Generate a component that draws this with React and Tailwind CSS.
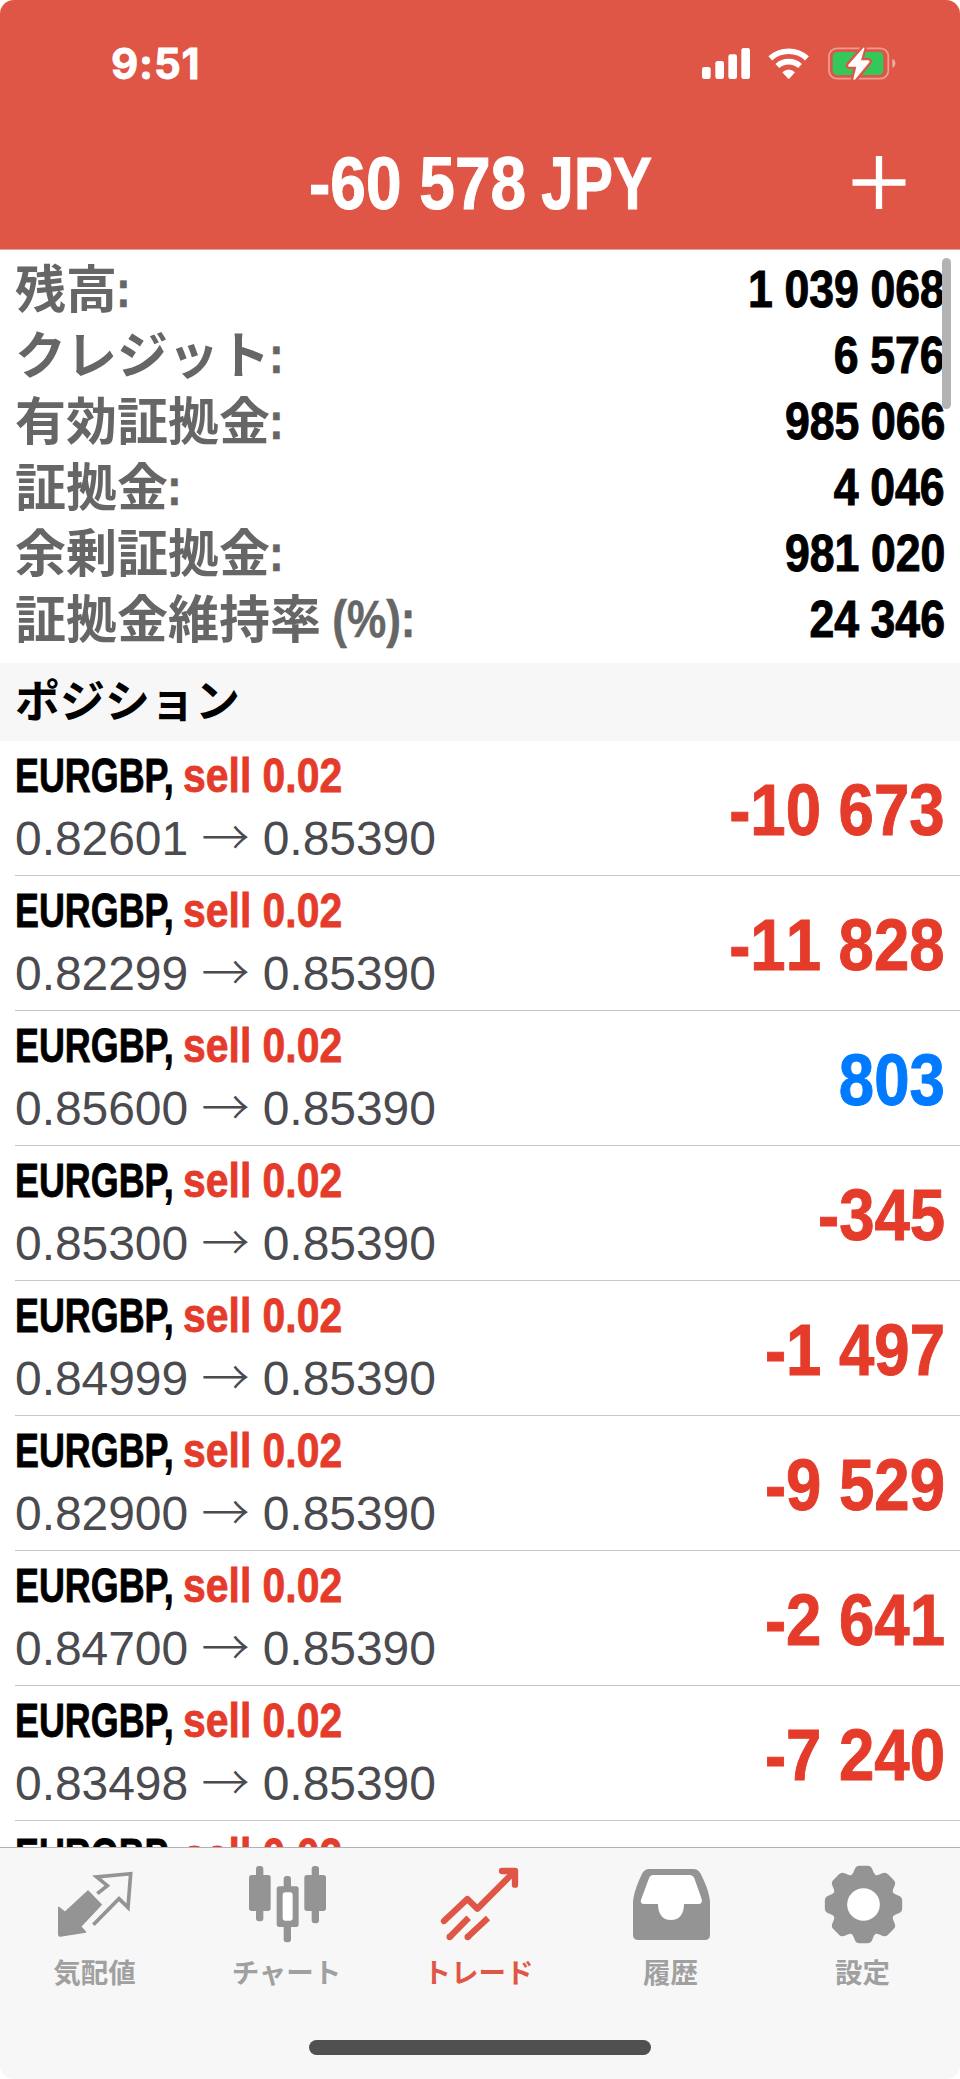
import React from "react";

const account = [
  { label: "残高", value: "1 039 068" },
  { label: "クレジット", value: "6 576" },
  { label: "有効証拠金", value: "985 066" },
  { label: "証拠金", value: "4 046" },
  { label: "余剰証拠金", value: "981 020" },
  { label: "証拠金維持率", unit: "(%)", value: "24 346" },
];

const positions = [
  { open: "0.82601", profit: "-10 673" },
  { open: "0.82299", profit: "-11 828" },
  { open: "0.85600", profit: "803" },
  { open: "0.85300", profit: "-345" },
  { open: "0.84999", profit: "-1 497" },
  { open: "0.82900", profit: "-9 529" },
  { open: "0.84700", profit: "-2 641" },
  { open: "0.83498", profit: "-7 240" },
  { open: "0.84250", profit: "-3 980" },
];

const StatusIcons = () => (
  <svg className="w-[196px] h-[35px]" viewBox="0 0 588 105" fill="#fff">
    <rect x="3" y="63" width="26" height="36" rx="7" />
    <rect x="43" y="45" width="26" height="54" rx="7" />
    <rect x="82" y="25" width="26" height="74" rx="7" />
    <rect x="121" y="6" width="26" height="93" rx="7" />
    <path d="M208 37A82 82 0 0 1 318 37" fill="none" stroke="#fff" strokeWidth="17" />
    <path d="M229 60A51 51 0 0 1 297 60" fill="none" stroke="#fff" strokeWidth="17" />
    <path d="M244 79Q263 62 282 79L266 97Q263 100 260 97Z" />
    <rect x="384" y="7" width="178" height="91" rx="24" fill="none" stroke="#fff" strokeOpacity="0.42" strokeWidth="5.5" />
    <rect x="395" y="18" width="152" height="69" rx="14" fill="#34c759" />
    <path d="M574 38Q583 42 583 52T574 66Z" fillOpacity="0.5" />
    <path
      d="M487 5L442 56Q439 61 444 62H466L457 98Q458 104 463 100L505 49Q508 44 502 43H480L490 8Q491 3 487 5Z"
      stroke="#df5646"
      strokeWidth="14"
      paintOrder="stroke"
    />
  </svg>
);

const QuotesIcon = () => (
  <svg className="w-20 h-20" viewBox="0 0 240 240">
    <path
      d="M8 127L27 142L96 78L136 119L74 185L89 201L13 213Q8 214 8 208Z"
      fill="currentColor"
      stroke="currentColor"
      strokeWidth="4"
      strokeLinejoin="round"
    />
    <path d="M124 86L154 62L122 36L224 26L216 128L189 101L112 179" fill="none" stroke="currentColor" strokeWidth="11" />
  </svg>
);

const ChartIcon = () => (
  <svg className="w-20 h-20" viewBox="0 0 240 240" fill="currentColor">
    <rect x="24" y="3" width="22" height="166" rx="9" />
    <rect x="3" y="30" width="65" height="108" rx="8" />
    <rect x="107" y="33" width="22" height="199" rx="9" />
    <rect x="86" y="64" width="66" height="122" rx="8" />
    <rect x="104" y="82" width="30" height="85" rx="8" fill="#fff" />
    <rect x="191" y="3" width="22" height="172" rx="9" />
    <rect x="169" y="30" width="65" height="108" rx="8" />
  </svg>
);

const TradeIcon = () => (
  <svg className="w-20 h-20" viewBox="0 0 240 240" fill="none" stroke="currentColor" strokeWidth="19" strokeLinejoin="round">
    <path d="M12 168L82 102L112 131L222 21" strokeLinecap="round" />
    <path d="M186 18H225V59" strokeLinecap="round" />
    <path d="M29 216L86 158M83 216L144 159" />
    <path d="M29 216h0.1M83 216h0.1" strokeLinecap="round" />
  </svg>
);

const HistoryIcon = () => (
  <svg className="w-20 h-20" viewBox="0 0 240 240">
    <path
      d="M3 209V115C3 85 20 48 31 25Q38 12 52 12H184Q198 12 205 25C217 48 234 85 234 115V209Q234 225 218 225H19Q3 225 3 209Z"
      fill="currentColor"
    />
    <path
      d="M64 30H172Q182 30 187 40L209 102Q212 117 200 117H156C156 148 142 165 117 165S78 148 78 117H36Q24 117 27 104L51 40Q55 30 64 30Z"
      fill="#fff"
    />
  </svg>
);

const SettingsIcon = () => (
  <svg className="w-20 h-20" viewBox="0 0 240 240">
    <g transform="translate(118.500 118.500)" fill="currentColor">
      <circle r="90" />
      {[0, 45, 90, 135, 180, 225, 270, 315].map((angle) => (
        <path
          key={angle}
          transform={`rotate(${angle})`}
          d="M0 0L-37 -88Q-31 -91 -27 -104Q-23 -116 -12 -116H12Q23 -116 27 -104Q31 -91 37 -88Z"
        />
      ))}
      <circle r="49" fill="#fff" />
    </g>
  </svg>
);

const tabs = [
  { label: "気配値", Icon: QuotesIcon },
  { label: "チャート", Icon: ChartIcon },
  { label: "トレード", Icon: TradeIcon, active: true },
  { label: "履歴", Icon: HistoryIcon },
  { label: "設定", Icon: SettingsIcon },
];

const Header = () => (
  <header className="h-[250px] shrink-0 bg-[#df5646] text-white rounded-t-[14px] border-b border-[#e2a49c]">
    <div className="h-[126px] pl-[111px] pr-[63px] flex justify-between">
      <span className="pt-[39px] font-['Inter'] text-[42px] leading-[50px] font-bold tracking-[0.8px] [-webkit-text-stroke:0.8px]">
        9:51
      </span>
      <div className="pt-[46px]">
        <StatusIcons />
      </div>
    </div>
    <div className="h-[116px] grid grid-cols-[120px_1fr_120px] items-center">
      <span />
      <h1 className="w-[343px] mx-auto flex text-[74px] leading-[116px] font-bold whitespace-nowrap [-webkit-text-stroke:1px]">
        <span className="w-[210px] shrink-0 origin-left scale-x-[0.865]">-60 578</span>
        <span className="w-0 grow flex justify-end">
          <span className="origin-right scale-x-[0.79]">JPY</span>
        </span>
      </h1>
      <button type="button" aria-label="New order" className="pb-[5px]">
        <svg className="w-[54px] h-[54px] ml-[12px]" viewBox="0 0 54 54" stroke="#fff" strokeWidth="6.300">
          <path d="M0.500 27.500H53.500M27 1V54" />
        </svg>
      </button>
    </div>
  </header>
);

const AccountRow = ({ label, unit, value }) => (
  <div className="h-[66px] flex justify-between font-bold leading-[66px] whitespace-nowrap">
    <div className="flex text-[#666]">
      <span className="h-[60px] font-['Noto_Sans_CJK_JP'] text-[51px] leading-[60px]">{label}</span>
      <span className="-ml-px text-[51px] leading-[68px] origin-left scale-x-[0.865] [-webkit-text-stroke:0.5px]">
        {unit ? `\u00a0${unit}:` : ":"}
      </span>
    </div>
    <span className="text-[51px] leading-[68px] origin-right scale-x-[0.875] [word-spacing:-1px] [-webkit-text-stroke:1px]">
      {value}
    </span>
  </div>
);

const PositionRow = ({ open, profit }) => (
  <li className="h-[135px] shrink-0 ml-[15px] pr-[15px] flex justify-between border-b border-[#c8c7cc] whitespace-nowrap">
    <div className="pt-[5px]">
      <div className="h-[58px] flex text-[49px] leading-[58px] font-bold [-webkit-text-stroke:0.8px]">
        <span className="w-[168px] origin-left scale-x-[0.732]">EURGBP,</span>
        <span className="origin-left scale-x-[0.835] text-[#e53b2a]">sell 0.02</span>
      </div>
      <div className="text-[48px] leading-[70px] tracking-[-0.05px] text-[#4a4a4f]">
        {open} <span className="font-['Noto_Sans_CJK_JP'] font-light leading-none">→</span> 0.85390
      </div>
    </div>
    <span
      className={`${profit.startsWith("-") ? "text-[#e53b2a]" : "text-[#007aff]"} text-[73px] leading-[138px] font-bold origin-right scale-x-[0.87] [font-kerning:none] [-webkit-text-stroke:1px]`}
    >
      {profit}
    </span>
  </li>
);

const TabBar = () => (
  <nav className="h-[232px] shrink-0 bg-[#f7f7f7] rounded-b-[14px] border-t border-[#b2b2b2] flex flex-col items-center">
    <div className="h-[192px] w-full pt-[17px] grid grid-cols-5">
      {tabs.map(({ label, Icon, active }) => (
        <div key={label} className={`${active ? "text-[#df5646]" : "text-[#949494]"} flex flex-col items-center`}>
          <Icon />
          <span
            className={`${active ? "" : "text-[#a0a0a0]"} mt-[6px] pr-[3px] font-['Noto_Sans_CJK_JP'] text-[27.500px] leading-[40px] font-bold`}
          >
            {label}
          </span>
        </div>
      ))}
    </div>
    <div className="w-[342px] h-[15px] rounded-full bg-[#505050]" />
  </nav>
);

const App = () => {
  return (
    <div className="relative w-[960px] h-[2079px] flex flex-col overflow-hidden bg-white font-['Liberation_Sans','Noto_Sans_CJK_JP',sans-serif] text-black">
      <Header />
      <main className="grow min-h-0 flex flex-col overflow-hidden">
        <section className="h-[413px] shrink-0 pt-[6px] px-[15px]">
          {account.map((row) => (
            <AccountRow key={row.label} {...row} />
          ))}
        </section>
        <h2 className="h-[78px] shrink-0 px-[15px] bg-[#f7f7f7] font-['Noto_Sans_CJK_JP'] text-[45px] leading-[72px] font-bold">
          ポジション
        </h2>
        <ul className="flex flex-col">
          {positions.map((position) => (
            <PositionRow key={position.open} {...position} />
          ))}
        </ul>
      </main>
      <TabBar />
      {/* scroll indicator */}
      <div className="absolute top-[258px] right-[9px] w-[9px] h-[151px] rounded-full bg-[#b3b3b3]" />
    </div>
  );
};

export default App;
